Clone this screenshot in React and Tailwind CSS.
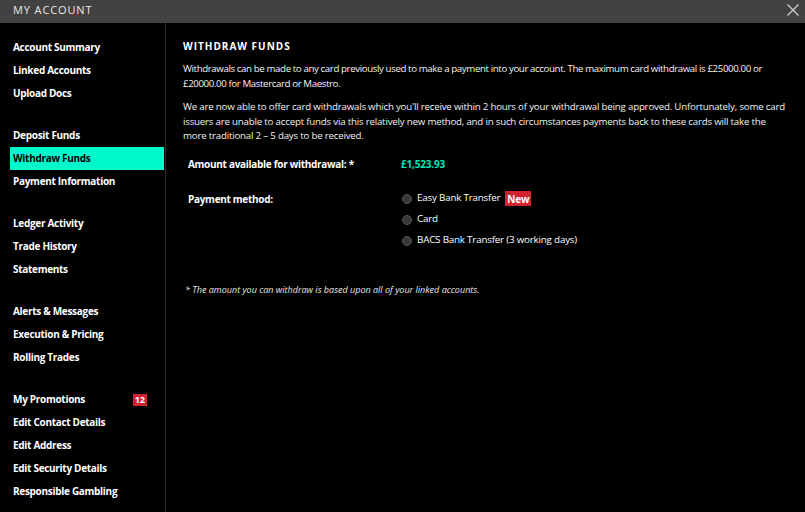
import React, { useState } from 'react';

const groups = [
    ['Account Summary', 'Linked Accounts', 'Upload Docs'],
    ['Deposit Funds', 'Withdraw Funds', 'Payment Information'],
    ['Ledger Activity', 'Trade History', 'Statements'],
    ['Alerts & Messages', 'Execution & Pricing', 'Rolling Trades'],
    ['My Promotions', 'Edit Contact Details', 'Edit Address', 'Edit Security Details', 'Responsible Gambling'],
];

const methods = [
    { id: 'easy', label: 'Easy Bank Transfer', isNew: true },
    { id: 'card', label: 'Card' },
    { id: 'bacs', label: 'BACS Bank Transfer (3 working days)' },
];

const App = () => {
    const [active, setActive] = useState('Withdraw Funds');
    const [method, setMethod] = useState(null);

    return (
        <div className="w-[805px] h-[512px] bg-black text-white flex flex-col overflow-hidden" style={{ fontFamily: '"Open Sans", "Liberation Sans", sans-serif' }}>
            {/* Title bar */}
            <div className="h-[23px] shrink-0 bg-[#424242] flex items-start justify-between pl-[13px] pr-[5px] pt-[3px]">
                <span className="text-[11px] tracking-[0.08em] text-[#e8e8e8] uppercase leading-[13px]">My Account</span>
                <button className="text-[#d0d0d0]">
                    <svg width="14" height="14" viewBox="0 0 14 14" fill="none" stroke="currentColor" strokeWidth="1.3">
                        <path d="M1.5 1.5 L12.5 12.5 M12.5 1.5 L1.5 12.5" />
                    </svg>
                </button>
            </div>

            <div className="flex flex-1 min-h-0">
                {/* Sidebar */}
                <nav className="w-[166px] shrink-0 border-r border-[#2c2c2c] pl-[10px] pr-px pt-[13px] flex flex-col gap-[19px]">
                    {groups.map((group, i) => (
                        <div key={i} className="flex flex-col">
                            {group.map((item) => (
                                <button
                                    key={item}
                                    onClick={() => setActive(item)}
                                    className={`h-[23px] flex items-center justify-between pl-[3px] pr-[17px] text-left text-[10px] tracking-[-0.03em] font-bold ${active === item ? 'bg-[#00f8cb] text-black' : 'text-white'}`}
                                >
                                    <span>{item}</span>
                                    {item === 'My Promotions' && (
                                        <span className="bg-[#d3222f] text-white text-[9px] tracking-normal leading-none px-[2px] h-[12px] flex items-center">12</span>
                                    )}
                                </button>
                            ))}
                        </div>
                    ))}
                </nav>

                {/* Main */}
                <main className="flex-1 pl-[17px] pr-[17px] pt-[18px]">
                    <h2 className="text-[10px] font-bold tracking-[0.1em] leading-none">WITHDRAW FUNDS</h2>
                    <p className="mt-[10px] text-[9.7px] tracking-[-0.04em] leading-[15px] text-[#f2f2f2]">
                        Withdrawals can be made to any card previously used to make a payment into your account. The maximum card withdrawal is £25000.00 or £20000.00 for Mastercard or Maestro.
                    </p>
                    <p className="mt-[9px] text-[9.7px] tracking-[-0.02em] leading-[14.5px] text-[#f2f2f2]">
                        We are now able to offer card withdrawals which you'll receive within 2 hours of your withdrawal being approved. Unfortunately, some card issuers are unable to accept funds via this relatively new method, and in such circumstances payments back to these cards will take the more traditional 2 – 5 days to be received.
                    </p>

                    <div className="mt-[13px] pl-[5px] flex items-center h-[16px]">
                        <span className="w-[213px] text-[10px] tracking-[-0.03em] font-bold">Amount available for withdrawal: *</span>
                        <span className="text-[10px] tracking-[-0.02em] font-bold text-[#00e5b8]">£1,523.93</span>
                    </div>

                    <div className="mt-[18px] pl-[5px] flex">
                        <span className="w-[214px] text-[10px] tracking-[-0.03em] font-bold leading-[16px]">Payment method:</span>
                        <div className="flex flex-col gap-[5px]">
                            {methods.map((m) => (
                                <label key={m.id} className="flex items-center h-[16px] text-[9.8px] tracking-[-0.02em] cursor-pointer" onClick={() => setMethod(m.id)}>
                                    <span className={`w-[10px] h-[10px] rounded-full mr-[5px] ${method === m.id ? 'bg-[#00f8cb]' : 'bg-[#3a3a3a]'} border border-[#555]`} />
                                    <span>{m.label}</span>
                                    {m.isNew && (
                                        <span className="ml-[5px] bg-[#d3222f] text-white font-bold text-[10px] tracking-[-0.02em] leading-none px-[2px] h-[15px] flex items-center">New</span>
                                    )}
                                </label>
                            ))}
                        </div>
                    </div>

                    <p className="mt-[34px] pl-[2px] text-[9px] italic text-[#e8e8e8]">
                        * The amount you can withdraw is based upon all of your linked accounts.
                    </p>
                </main>
            </div>
        </div>
    );
};

export default App;
